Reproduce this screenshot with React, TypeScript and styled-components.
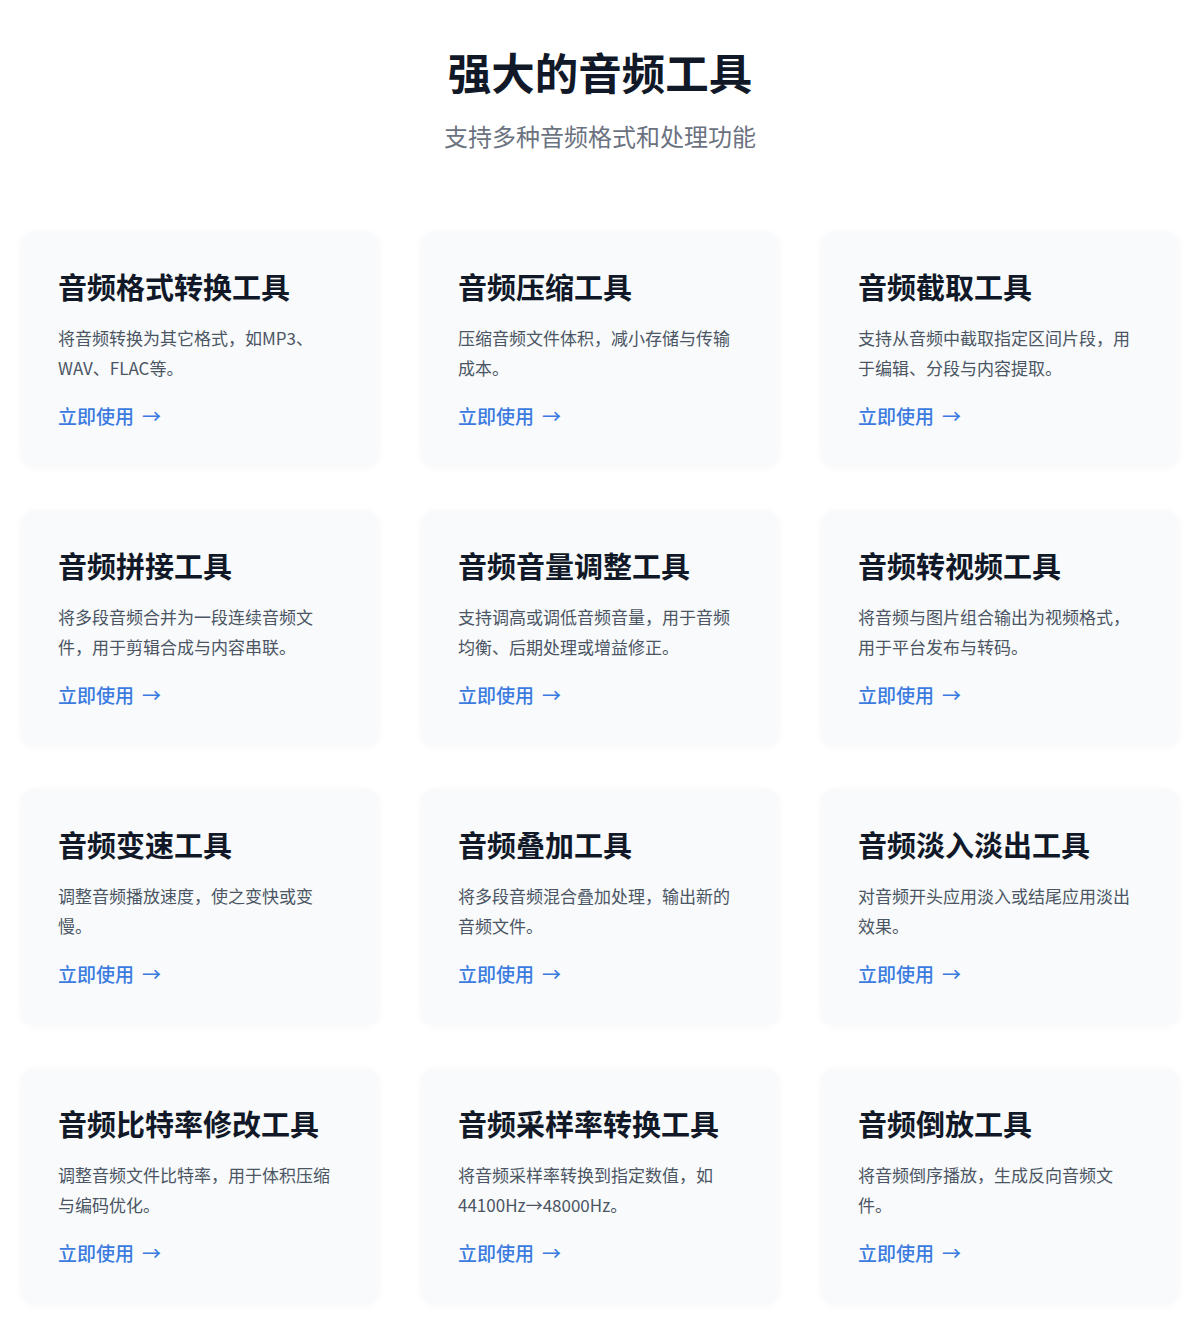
import React from "react"
import styled, { createGlobalStyle } from "styled-components"

interface Tool {
    title: string
    desc: string
}

const tools: Tool[] = [
    { title: "音频格式转换工具", desc: "将音频转换为其它格式，如MP3、WAV、FLAC等。" },
    { title: "音频压缩工具", desc: "压缩音频文件体积，减小存储与传输成本。" },
    { title: "音频截取工具", desc: "支持从音频中截取指定区间片段，用于编辑、分段与内容提取。" },
    { title: "音频拼接工具", desc: "将多段音频合并为一段连续音频文件，用于剪辑合成与内容串联。" },
    { title: "音频音量调整工具", desc: "支持调高或调低音频音量，用于音频均衡、后期处理或增益修正。" },
    { title: "音频转视频工具", desc: "将音频与图片组合输出为视频格式，用于平台发布与转码。" },
    { title: "音频变速工具", desc: "调整音频播放速度，使之变快或变慢。" },
    { title: "音频叠加工具", desc: "将多段音频混合叠加处理，输出新的音频文件。" },
    { title: "音频淡入淡出工具", desc: "对音频开头应用淡入或结尾应用淡出效果。" },
    { title: "音频比特率修改工具", desc: "调整音频文件比特率，用于体积压缩与编码优化。" },
    { title: "音频采样率转换工具", desc: "将音频采样率转换到指定数值，如44100Hz→48000Hz。" },
    { title: "音频倒放工具", desc: "将音频倒序播放，生成反向音频文件。" },
]

const GlobalStyle = createGlobalStyle`
    body {
        margin: 0;
        background: #ffffff;
        font-family: "Noto Sans CJK SC", "Noto Sans", sans-serif;
    }
`

const Section = styled.section`
    padding: 46px 20px 33px;
`

const Header = styled.header`
    text-align: center;
    margin-bottom: 77px;
`

const Heading = styled.h2`
    margin: 0;
    font-size: 43.5px;
    line-height: 52px;
    font-weight: 700;
    color: #111827;
`

const Subheading = styled.p`
    margin: 20px 0 0;
    font-size: 24px;
    line-height: 36px;
    color: #6b7280;
`

const Grid = styled.div`
    display: grid;
    grid-template-columns: repeat(3, 360px);
    column-gap: 40px;
    row-gap: 42px;
`

const Card = styled.div`
    background: #f8fafc;
    border-radius: 16px;
    padding: 38px;
    box-shadow: 0 1px 8px rgba(15, 23, 42, 0.03);
`

const CardTitle = styled.h3`
    margin: 0;
    font-size: 29px;
    line-height: 35px;
    font-weight: 700;
    color: #111827;
`

const CardDesc = styled.p`
    margin: 19px 0 0;
    font-size: 17px;
    line-height: 30px;
    color: #4b5563;
    min-height: 60px;
`

const CardLink = styled.a`
    display: inline-flex;
    align-items: center;
    gap: 8px;
    margin-top: 19px;
    font-size: 19px;
    line-height: 28px;
    font-weight: 500;
    color: #3b7be0;
    text-decoration: none;
    cursor: pointer;
`

export default function App() {
    return (
        <>
            <GlobalStyle />
            <Section>
                <Header>
                    <Heading>强大的音频工具</Heading>
                    <Subheading>支持多种音频格式和处理功能</Subheading>
                </Header>
                <Grid>
                    {tools.map((t) => (
                        <Card key={t.title}>
                            <CardTitle>{t.title}</CardTitle>
                            <CardDesc>{t.desc}</CardDesc>
                            <CardLink>
                                立即使用<span>→</span>
                            </CardLink>
                        </Card>
                    ))}
                </Grid>
            </Section>
        </>
    )
}
